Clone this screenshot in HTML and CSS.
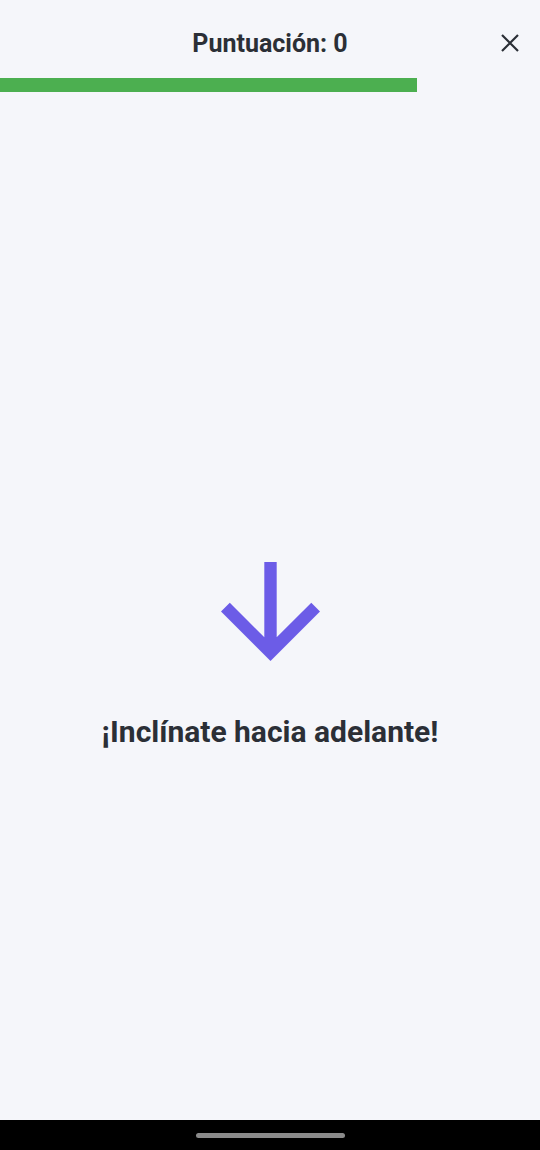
FILE: index.html
```html
<!DOCTYPE html>
<html lang="es">
<head>
<meta charset="UTF-8">
<meta name="viewport" content="width=device-width, initial-scale=1.0">
<title>Inclínate</title>
<link rel="stylesheet" href="styles.css">
</head>
<body>

<div class="screen">
    <div class="top-bar">
        <h1 class="score">Puntuación: 0</h1>
        <button class="close-btn" aria-label="Cerrar">
            <svg width="20" height="20" viewBox="0 0 20 20">
                <path d="M2 2 L18 18 M18 2 L2 18" stroke="#2b2f36" stroke-width="2.2" fill="none"/>
            </svg>
        </button>
    </div>

    <div class="progress">
        <div class="progress-fill" style="width: 417px"></div>
    </div>

    <div class="main">
        <svg class="arrow" width="99" height="99" viewBox="4 4 16 16">
            <path d="M20 12l-1.41-1.41L13 16.17V4h-2v12.17l-5.58-5.59L4 12l8 8 8-8z" fill="#6c5ce7"/>
        </svg>
        <p class="prompt">¡Inclínate hacia adelante!</p>
    </div>

    <div class="nav-bar">
        <div class="nav-handle"></div>
    </div>
</div>

</body>
</html>
```

FILE: styles.css
```css
body {
    margin: 0;
    padding: 0;
    font-family: Roboto, "Liberation Sans", sans-serif;
    background-color: #f5f6fa;
    color: #2b2f36;
}

.screen {
    display: flex;
    flex-direction: column;
    height: 1150px;
}

.top-bar {
    height: 78px;
    display: flex;
    justify-content: center;
    position: relative;
}

.score {
    margin: 0;
    padding-top: 29px;
    font-size: 25px;
    line-height: 30px;
    font-weight: 700;
}

.close-btn {
    position: absolute;
    top: 33px;
    right: 20px;
    width: 20px;
    height: 20px;
    padding: 0;
    border: none;
    background: none;
}

.close-btn svg {
    display: block;
}

.progress {
    height: 14px;
}

.progress-fill {
    height: 100%;
    background-color: #4caf50;
}

.main {
    flex: 1;
    display: flex;
    flex-direction: column;
    align-items: center;
    padding-top: 470px;
}

.arrow {
    display: block;
}

.prompt {
    margin: 52px 0 0;
    font-size: 30px;
    line-height: 38px;
    font-weight: 700;
}

.nav-bar {
    height: 30px;
    background-color: #000;
    display: flex;
    justify-content: center;
    align-items: center;
}

.nav-handle {
    width: 149px;
    height: 5px;
    border-radius: 3px;
    background-color: #8a8a8a;
}
```
